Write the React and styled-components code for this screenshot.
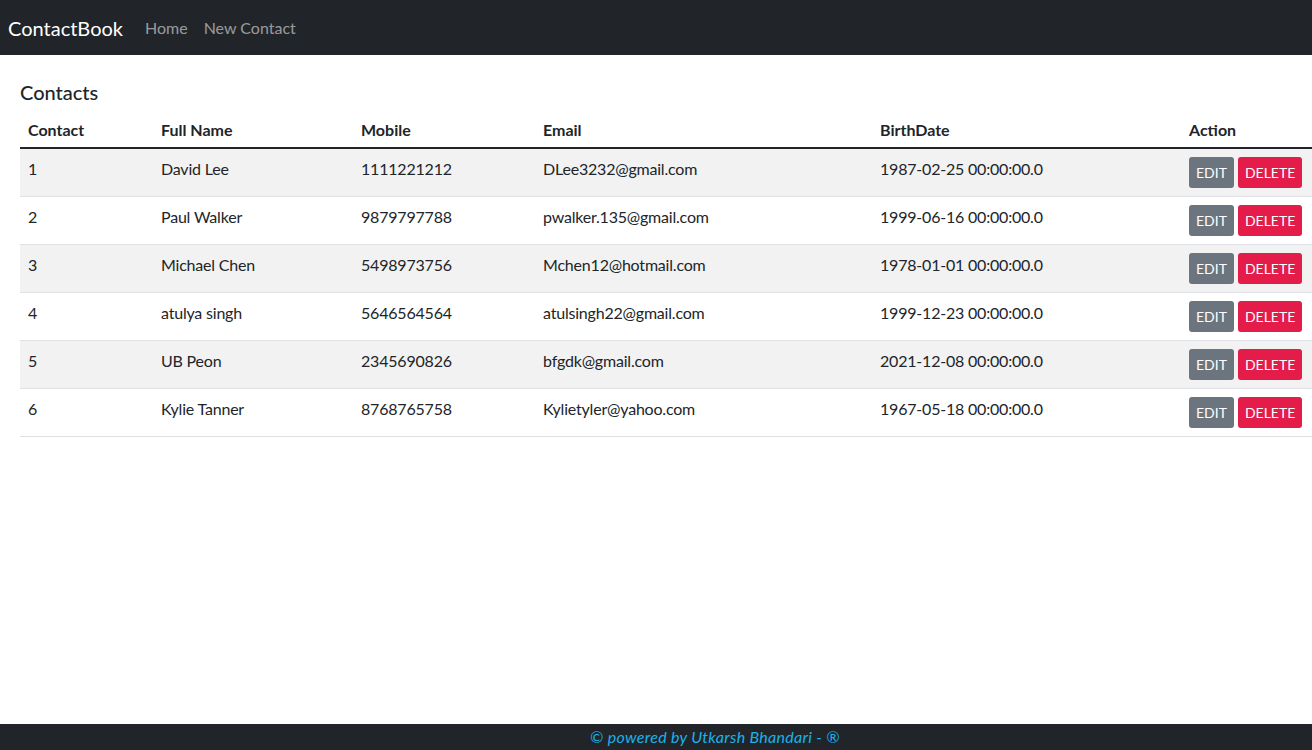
import styled, { createGlobalStyle } from "styled-components";

const contacts = [
  { id: 1, name: "David Lee", mobile: "1111221212", email: "DLee3232@gmail.com", birth: "1987-02-25 00:00:00.0" },
  { id: 2, name: "Paul Walker", mobile: "9879797788", email: "pwalker.135@gmail.com", birth: "1999-06-16 00:00:00.0" },
  { id: 3, name: "Michael Chen", mobile: "5498973756", email: "Mchen12@hotmail.com", birth: "1978-01-01 00:00:00.0" },
  { id: 4, name: "atulya singh", mobile: "5646564564", email: "atulsingh22@gmail.com", birth: "1999-12-23 00:00:00.0" },
  { id: 5, name: "UB Peon", mobile: "2345690826", email: "bfgdk@gmail.com", birth: "2021-12-08 00:00:00.0" },
  { id: 6, name: "Kylie Tanner", mobile: "8768765758", email: "Kylietyler@yahoo.com", birth: "1967-05-18 00:00:00.0" },
];

const columns = [
  { title: "Contact", width: 133 },
  { title: "Full Name", width: 200 },
  { title: "Mobile", width: 182 },
  { title: "Email", width: 337 },
  { title: "BirthDate", width: 309 },
  { title: "Action", width: 131 },
];

export default function App() {
  return (
    <>
      <GlobalStyle />
      <Navbar>
        <Brand href="#">ContactBook</Brand>
        <NavLink href="#">Home</NavLink>
        <NavLink href="#">New Contact</NavLink>
      </Navbar>
      <Main>
        <Heading>Contacts</Heading>
        <Table>
          <colgroup>
            {columns.map(({ title, width }) => (
              <col key={title} style={{ width }} />
            ))}
          </colgroup>
          <thead>
            <tr>
              {columns.map(({ title }) => (
                <Th key={title}>{title}</Th>
              ))}
            </tr>
          </thead>
          <tbody>
            {contacts.map((c, i) => (
              <Row key={c.id} $striped={i % 2 === 0}>
                <Td>{c.id}</Td>
                <Td>{c.name}</Td>
                <Td>{c.mobile}</Td>
                <Td>{c.email}</Td>
                <Td>{c.birth}</Td>
                <Td>
                  <Actions>
                    <Button $color="#6c757d">Edit</Button>
                    <Button $color="#e31c4a">Delete</Button>
                  </Actions>
                </Td>
              </Row>
            ))}
          </tbody>
        </Table>
      </Main>
      <Footer>© powered by Utkarsh Bhandari - ®</Footer>
    </>
  );
}

const GlobalStyle = createGlobalStyle`
  body {
    margin: 0;
    font-family: Lato, "Noto Sans", sans-serif;
    font-size: 16px;
    color: #212529;
    background: #fff;
  }
`;

const Navbar = styled.nav`
  height: 55px;
  background: #212529;
  display: flex;
  align-items: center;
  padding: 0 8px;
  box-sizing: border-box;
`;

const Brand = styled.a`
  color: #fff;
  font-size: 20px;
  text-decoration: none;
  margin-right: 14px;
`;

const NavLink = styled.a`
  color: rgba(255, 255, 255, 0.55);
  text-decoration: none;
  padding: 8px;
  font-size: 16px;
`;

const Main = styled.main`
  padding: 25px 0 0 20px;
`;

const Heading = styled.h5`
  margin: 0 0 6px;
  font-size: 20px;
  font-weight: 500;
  line-height: 24px;
`;

const Table = styled.table`
  width: 100%;
  border-collapse: collapse;
  table-layout: fixed;
`;

const Th = styled.th`
  text-align: left;
  font-weight: 700;
  padding: 8px 8px 5px;
  line-height: 24px;
  border-bottom: 2px solid #212529;
`;

const Row = styled.tr`
  background: ${({ $striped }) => ($striped ? "#f2f2f2" : "#fff")};
  border-bottom: 1px solid #dee2e6;
`;

const Td = styled.td`
  padding: 8px;
  line-height: 24px;
  vertical-align: top;
  white-space: nowrap;
  letter-spacing: -0.2px;
`;

const Actions = styled.div`
  display: flex;
  gap: 4px;
`;

const Button = styled.button`
  background: ${({ $color }) => $color};
  color: #fff;
  border: none;
  border-radius: 3px;
  font-family: inherit;
  font-size: 14px;
  text-transform: uppercase;
  padding: 0 7px;
  height: 31px;
  line-height: 31px;
  cursor: pointer;
`;

const Footer = styled.footer`
  position: fixed;
  left: 0;
  right: 0;
  bottom: 0;
  height: 26px;
  padding-left: 118px;
  background: #212529;
  color: #1ab2ea;
  font-style: italic;
  text-align: center;
  line-height: 26px;
  font-size: 16px;
  letter-spacing: 0.3px;
`;
